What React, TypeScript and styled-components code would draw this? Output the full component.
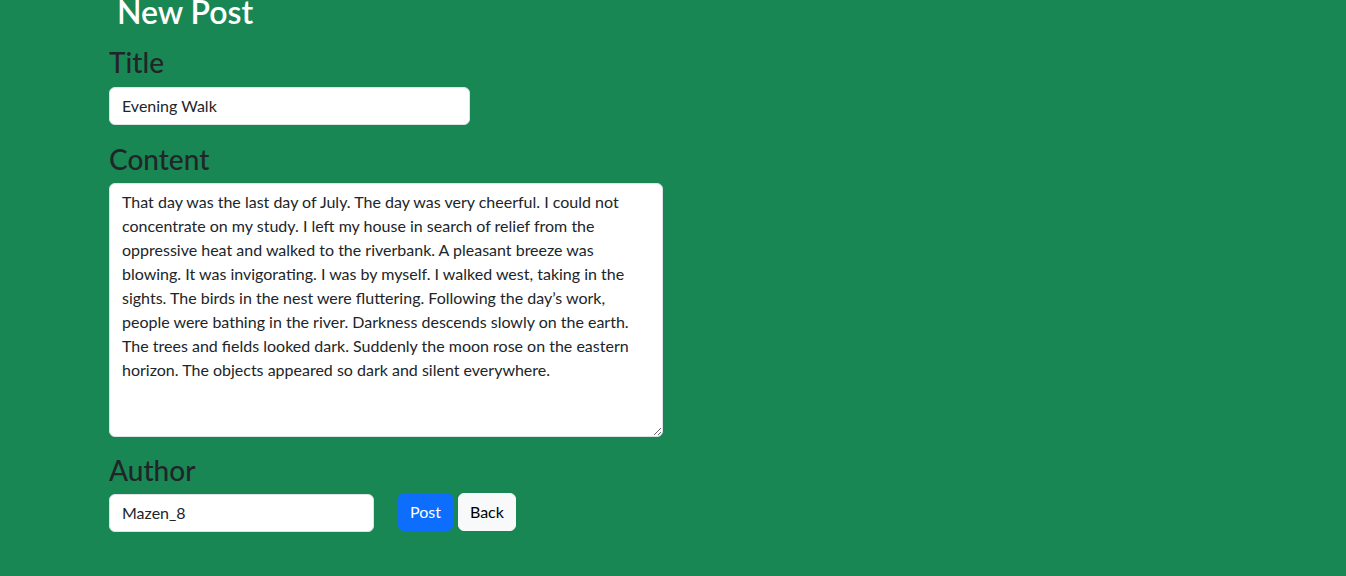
import React, { useState } from "react";
import styled, { createGlobalStyle } from "styled-components";

const GlobalStyle = createGlobalStyle`
  html, body {
    margin: 0;
    padding: 0;
    background: #198754;
    min-height: 100%;
  }
  body {
    font-family: Lato, "Liberation Sans", sans-serif;
    color: #212529;
  }
  * { box-sizing: border-box; }
`;

const Page = styled.main`
  min-height: 576px;
  background: #198754;
  padding: 0 0 40px 109px;
`;

const Heading = styled.h1`
  margin: 0 0 21px;
  padding-left: 8px;
  font-size: 32px;
  font-weight: 600;
  line-height: 24px;
  color: #ffffff;
`;

const Group = styled.div<{ $gap?: number }>`
  display: flex;
  flex-direction: column;
  align-items: flex-start;
  margin-bottom: ${(p) => p.$gap ?? 16}px;
`;

const Label = styled.label<{ $shift?: number }>`
  display: block;
  margin: 0 0 ${(p) => 7 - (p.$shift ?? 0)}px;
  padding-top: ${(p) => 1 + (p.$shift ?? 0)}px;
  font-size: 28px;
  font-weight: 500;
  line-height: 33.6px;
  color: #212529;
`;

const fieldBase = `
  display: block;
  font-family: Lato, "Liberation Sans", sans-serif;
  font-size: 16px;
  line-height: 24px;
  color: #212529;
  background: #ffffff;
  border: 1px solid #dee2e6;
  border-radius: 6px;
  padding: 6px 12px;
  outline: none;
`;

const Input = styled.input<{ $width: number }>`
  ${fieldBase}
  width: ${(p) => p.$width}px;
  height: 38px;
`;

const TextArea = styled.textarea`
  ${fieldBase}
  width: 554px;
  height: 254px;
  resize: both;
  margin: 0;
`;

const AuthorRow = styled.div`
  display: flex;
  align-items: flex-start;
`;

const AuthorInput = styled(Input)`
  margin-top: 1px;
  margin-right: 24px;
`;

const Button = styled.button<{ $variant: "primary" | "light" }>`
  font-family: Lato, "Liberation Sans", sans-serif;
  font-size: 16px;
  line-height: 24px;
  height: 38px;
  padding: 6px 11px;
  border-radius: 6px;
  cursor: pointer;
  margin-right: 5px;
  border: 1px solid ${(p) => (p.$variant === "primary" ? "#0d6efd" : "#f8f9fa")};
  background: ${(p) => (p.$variant === "primary" ? "#0d6efd" : "#f8f9fa")};
  color: ${(p) => (p.$variant === "primary" ? "#ffffff" : "#000000")};
`;

const CONTENT =
  "That day was the last day of July. The day was very cheerful. I could not concentrate on my study. I left my house in search of relief from the oppressive heat and walked to the riverbank. A pleasant breeze was blowing. It was invigorating. I was by myself. I walked west, taking in the sights. The birds in the nest were fluttering. Following the day\u2019s work, people were bathing in the river. Darkness descends slowly on the earth. The trees and fields looked dark. Suddenly the moon rose on the eastern horizon. The objects appeared so dark and silent everywhere.";

export default function App() {
  const [title, setTitle] = useState("Evening Walk");
  const [content, setContent] = useState(CONTENT);
  const [author, setAuthor] = useState("Mazen_8");

  return (
    <>
      <GlobalStyle />
      <Page>
        <Heading>New Post</Heading>
        <Group $gap={17}>
          <Label htmlFor="title">Title</Label>
          <Input id="title" $width={361} value={title} onChange={(e) => setTitle(e.target.value)} />
        </Group>
        <Group $gap={14}>
          <Label htmlFor="content">Content</Label>
          <TextArea id="content" value={content} onChange={(e) => setContent(e.target.value)} />
        </Group>
        <Group>
          <Label htmlFor="author" $shift={2}>Author</Label>
          <AuthorRow>
            <AuthorInput id="author" $width={265} value={author} onChange={(e) => setAuthor(e.target.value)} />
            <Button $variant="primary">Post</Button>
            <Button $variant="light">Back</Button>
          </AuthorRow>
        </Group>
      </Page>
    </>
  );
}
